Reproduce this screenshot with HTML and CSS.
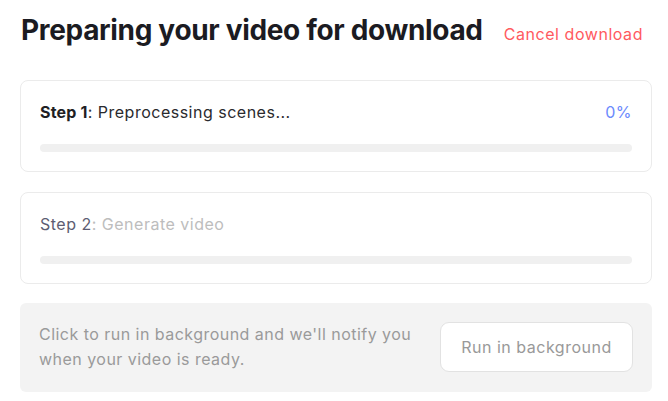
FILE: index.html
```html
<!DOCTYPE html>
<html>
<head>
<meta charset="utf-8">
<link rel="stylesheet" href="styles.css">
</head>
<body>
<div class="page">
  <div class="header">
    <h1 class="title">Preparing your video for download</h1>
    <a class="cancel">Cancel download</a>
  </div>
  <div class="card">
    <div class="step-row">
      <div class="step"><span class="label-active">Step 1</span>: <span class="text-active">Preprocessing scenes...</span></div>
      <div class="pct">0%</div>
    </div>
    <div class="bar"><div class="fill" style="width:0%"></div></div>
  </div>
  <div class="card">
    <div class="step-row">
      <div class="step"><span class="label-idle">Step 2</span><span class="text-idle">: Generate video</span></div>
    </div>
    <div class="bar"><div class="fill" style="width:0%"></div></div>
  </div>
  <div class="panel">
    <p class="panel-text">Click to run in background and we'll notify you when your video is ready.</p>
    <button class="bg-btn">Run in background</button>
  </div>
</div>
</body>
</html>
```
FILE: styles.css
```css
* { box-sizing: border-box; }
html, body { margin: 0; padding: 0; background: #fff; }
body { font-family: Inter, "Noto Sans", sans-serif; }
.page { padding: 13px 16px 0 20px; width: 668px; }
.header { display: flex; align-items: baseline; justify-content: space-between; padding: 0 9px 0 1px; margin-bottom: 33px; }
.title { margin: 0; font-size: 28px; line-height: 34px; font-weight: 700; color: #1b1b22; letter-spacing: -0.33px; }
.cancel { font-size: 16px; color: #ff5a5f; line-height: 20px; letter-spacing: 0.55px; }
.card { border: 1px solid #ebebeb; border-radius: 8px; padding: 19px; margin-bottom: 20px; width: 632px; }
.step-row { display: flex; justify-content: space-between; align-items: center; height: 24px; margin-bottom: 20px; }
.step { font-size: 16px; line-height: 24px; color: #333; letter-spacing: 0.5px; }
.label-active { font-weight: 700; color: #1f1f24; letter-spacing: 0.2px; }
.text-active { color: #2a2a2e; }
.label-idle { color: #5d5d72; }
.text-idle { color: #bdbdbd; }
.pct { font-size: 16px; color: #6b8afd; letter-spacing: 0.5px; }
.bar { height: 8px; border-radius: 4px; background: #f0f0f0; overflow: hidden; }
.fill { height: 100%; background: #6b8afd; }
.panel { margin-top: -1px; width: 632px; background: #f3f3f3; border-radius: 6px; padding: 19px 19px 20px 19px; display: flex; align-items: center; justify-content: space-between; }
.panel-text { margin: 0; font-size: 16px; line-height: 25px; color: #9a9a9a; width: 385px; letter-spacing: 0.47px; }
.bg-btn { width: 193px; height: 50px; background: #fff; border: 1px solid #e2e2e2; border-radius: 9px; font-family: inherit; font-size: 16px; color: #999; padding: 0; letter-spacing: 0.5px; }
```
